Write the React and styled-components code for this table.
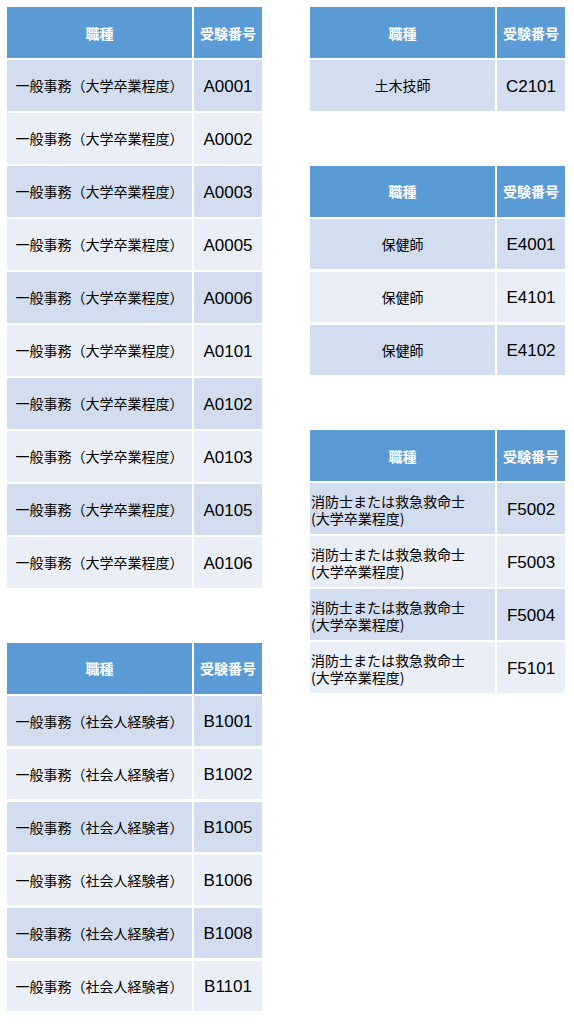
import React from "react";
import styled, { createGlobalStyle } from "styled-components";

const GlobalStyle = createGlobalStyle`
  html, body {
    margin: 0;
    padding: 0;
    background: #ffffff;
  }
  body {
    font-family: "Liberation Sans", "Noto Sans CJK JP", sans-serif;
    color: #000000;
  }
`;

const Page = styled.div`
  display: flex;
  align-items: flex-start;
  gap: 48px;
  padding: 7px;
`;

const Column = styled.div`
  display: flex;
  flex-direction: column;
  gap: 55px;
`;

const Table = styled.div`
  display: grid;
  grid-template-columns: 185px 68px;
  grid-auto-rows: 50.5px;
  column-gap: 2px;
  row-gap: 2.5px;
`;

const HeadCell = styled.div`
  height: 51px;
  display: flex;
  align-items: center;
  justify-content: center;
  background: #5b9bd5;
  color: #ffffff;
  font-family: "Noto Sans CJK JP", sans-serif;
  font-weight: 700;
  font-size: 14px;
  white-space: nowrap;
  overflow: hidden;
`;

const NameCell = styled.div`
  display: flex;
  align-items: center;
  justify-content: ${(p) => (p.$left ? "flex-start" : "center")};
  padding: ${(p) => (p.$left ? "3px 0 0 1px" : "1px 0 0 0")};
  background: ${(p) => (p.$odd ? "#d2deef" : "#eaeff7")};
  font-family: "Noto Sans CJK JP", sans-serif;
  font-size: 14px;
  line-height: 17px;
  text-align: left;
  white-space: nowrap;
  overflow: hidden;
`;

const CodeCell = styled.div`
  display: flex;
  align-items: center;
  justify-content: center;
  padding-top: 3px;
  background: ${(p) => (p.$odd ? "#d2deef" : "#eaeff7")};
  font-family: "Liberation Sans", Arial, sans-serif;
  font-size: 17px;
`;

const JobTable = ({ rows, left }) => (
  <Table>
    <HeadCell>職種</HeadCell>
    <HeadCell>受験番号</HeadCell>
    {rows.map(([name, code], i) => (
      <React.Fragment key={code}>
        <NameCell $odd={i % 2 === 0} $left={left}>
          {name}
        </NameCell>
        <CodeCell $odd={i % 2 === 0}>{code}</CodeCell>
      </React.Fragment>
    ))}
  </Table>
);

const daisotsu = "一般事務（大学卒業程度）";
const shakaijin = "一般事務（社会人経験者）";
const shobo = (
  <span>
    消防士または救急救命士
    <br />
    (大学卒業程度)
  </span>
);

const tableA = ["A0001", "A0002", "A0003", "A0005", "A0006", "A0101", "A0102", "A0103", "A0105", "A0106"].map(
  (c) => [daisotsu, c]
);
const tableB = ["B1001", "B1002", "B1005", "B1006", "B1008", "B1101"].map((c) => [shakaijin, c]);
const tableC = [["土木技師", "C2101"]];
const tableE = [
  ["保健師", "E4001"],
  ["保健師", "E4101"],
  ["保健師", "E4102"],
];
const tableF = ["F5002", "F5003", "F5004", "F5101"].map((c) => [shobo, c]);

export default function App() {
  return (
    <>
      <GlobalStyle />
      <Page>
        <Column>
          <JobTable rows={tableA} />
          <JobTable rows={tableB} />
        </Column>
        <Column>
          <JobTable rows={tableC} />
          <JobTable rows={tableE} />
          <JobTable rows={tableF} left />
        </Column>
      </Page>
    </>
  );
}
